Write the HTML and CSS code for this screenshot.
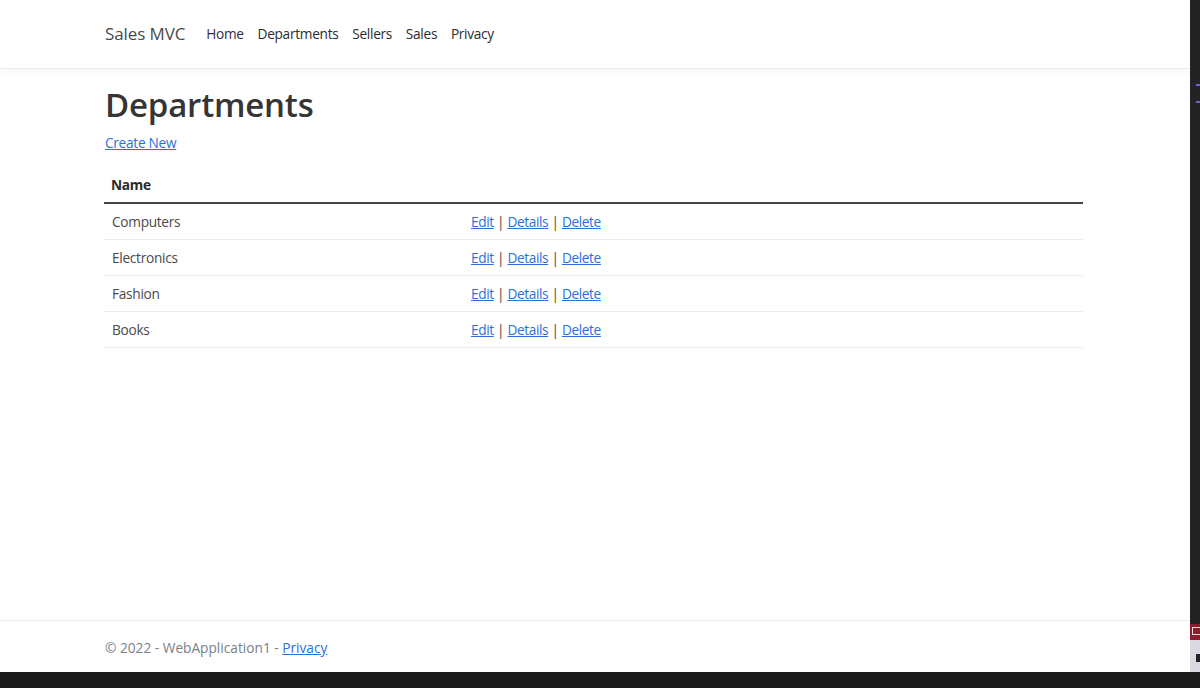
FILE: index.html
```html
<!DOCTYPE html>
<html lang="en">
<head>
<meta charset="utf-8">
<title>Departments - Sales MVC</title>
<link rel="stylesheet" href="styles.css">
</head>
<body>
<div class="screen">
  <div class="viewport">
    <div class="page">
      <header class="navbar">
        <div class="container nav-inner">
          <a class="brand" href="#">Sales MVC</a>
          <nav class="nav-links">
            <a class="nav-link visited" href="#">Home</a>
            <a class="nav-link" href="#">Departments</a>
            <a class="nav-link" href="#">Sellers</a>
            <a class="nav-link" href="#">Sales</a>
            <a class="nav-link" href="#">Privacy</a>
          </nav>
        </div>
      </header>
      <main class="container main">
        <h1 class="title">Departments</h1>
        <p class="create"><a href="#">Create New</a></p>
        <table class="table">
          <thead>
            <tr><th class="col-name">Name</th><th></th></tr>
          </thead>
          <tbody>
            <tr><td>Computers</td><td><a href="#">Edit</a> | <a href="#">Details</a> | <a href="#">Delete</a></td></tr>
            <tr><td>Electronics</td><td><a href="#">Edit</a> | <a href="#">Details</a> | <a href="#">Delete</a></td></tr>
            <tr><td>Fashion</td><td><a href="#">Edit</a> | <a href="#">Details</a> | <a href="#">Delete</a></td></tr>
            <tr><td>Books</td><td><a href="#">Edit</a> | <a href="#">Details</a> | <a href="#">Delete</a></td></tr>
          </tbody>
        </table>
      </main>
      <footer class="footer">
        <div class="container">&copy; 2022 - WebApplication1 - <a href="#">Privacy</a></div>
      </footer>
    </div>
    <aside class="side-strip">
      <div class="strip-top"><span class="mark"></span><span class="mark"></span></div>
      <div class="strip-red"><span class="strip-icon"></span></div>
      <div class="strip-light"><span class="strip-dot"></span></div>
    </aside>
  </div>
  <div class="bottom-strip"></div>
</div>
</body>
</html>
```

FILE: styles.css
```css
* { box-sizing: border-box; }
html, body { margin: 0; padding: 0; }
body {
  width: 1200px;
  height: 688px;
  overflow: hidden;
  background: #1b1b1b;
  font-family: "Open Sans", "Noto Sans", sans-serif;
  font-size: 13.7px;
  line-height: 1.5;
  color: #212529;
}
.screen { display: flex; flex-direction: column; width: 1200px; height: 688px; }
.viewport { display: flex; height: 672px; }
.page {
  width: 1190px;
  height: 672px;
  background: #fff;
  display: flex;
  flex-direction: column;
}
.container { width: 979px; margin-left: 104px; }
a { color: #2a6fdb; text-decoration: underline; }

.navbar {
  height: 69px;
  border-bottom: 1px solid #ececec;
  box-shadow: 0 3px 8px rgba(0,0,0,.04);
  display: flex;
  align-items: center;
}
.nav-inner { display: flex; align-items: center; }
.brand {
  font-size: 17px;
  color: #4a4a4a;
  text-decoration: none;
  margin-right: 14px;
  letter-spacing: -0.1px;
  padding-left: 1px;
}
.nav-links { display: flex; }
.nav-link {
  color: #2b2b2b;
  text-decoration: none;
  padding: 0 6.9px;
  font-size: 13.7px;
  letter-spacing: -0.3px;
}
.nav-link.visited { color: #3a2a48; }

.main { flex: 1; padding-top: 16px; }
.title {
  font-size: 33px;
  font-weight: 600;
  line-height: 1.2;
  margin: 0 0 8px 0;
  color: #353535;
  letter-spacing: -0.2px;
  padding-left: 1px;
}
.create { margin: 0 0 12px 0; letter-spacing: -0.3px; padding-left: 1px; }

.table { width: 979px; border-collapse: collapse; }
.table th, .table td {
  text-align: left;
  padding: 7px 7px;
  font-size: 13.7px;
  line-height: 21px;
  vertical-align: top;
  letter-spacing: -0.3px;
}
.table th { font-weight: 700; color: #2a2a2a; padding-top: 9px; padding-bottom: 7px; }
.table thead tr { border-bottom: 2px solid #444; }
.table td { color: #4a4a4a; border-bottom: 1px solid #ececec; }
.table td:first-child { padding-left: 8px; }
.col-name { width: 360px; }
.table td:last-child a { letter-spacing: -0.4px; }

.footer {
  height: 52px;
  border-top: 1px solid #ececec;
  display: flex;
  align-items: center;
  color: #7a8088;
  font-size: 13.7px;
  padding-top: 3px;
}
.footer .container { padding-left: 1px; }

.side-strip {
  width: 10px;
  height: 672px;
  background: #232323;
  display: flex;
  flex-direction: column;
}
.strip-top { flex: 1; position: relative; }
.mark {
  position: absolute;
  left: 6px;
  width: 4px;
  height: 2px;
  background: #6b63c9;
}
.mark:first-child { top: 84px; }
.mark:last-child { top: 101px; }
.strip-red { height: 16px; background: #8e1c2f; position: relative; }
.strip-icon {
  position: absolute;
  left: 2px; top: 3px;
  width: 8px; height: 8px;
  border: 1px solid #f1dde0;
  border-right: none;
}
.strip-light { height: 32px; background: #d9d9e1; position: relative; }
.strip-dot {
  position: absolute; left: 6px; top: 14px;
  width: 4px; height: 8px; background: #222;
}
.bottom-strip { height: 16px; background: #1b1b1b; }
```
